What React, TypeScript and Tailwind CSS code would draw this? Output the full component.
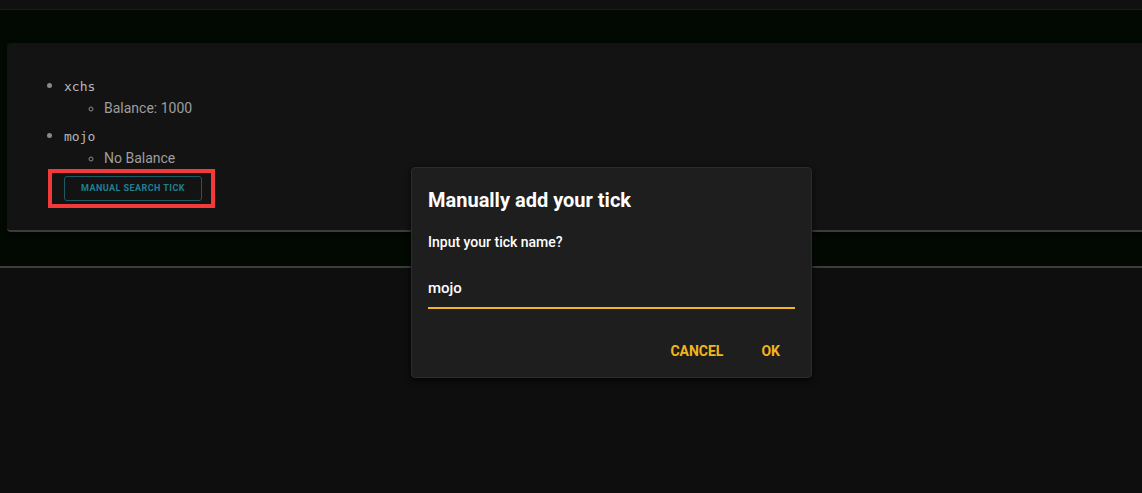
export default function App() {
  return (
    <div className="relative min-h-[493px] w-[1142px] overflow-hidden bg-[#0e0e0e] font-['Roboto',sans-serif]">
      {/* top bar */}
      <div className="h-[10px] border-b border-[#1b1b1b] bg-[#101010]" />

      {/* green band with card */}
      <section className="border-b-2 border-[#3a3d3a] bg-[#020902] pb-[34px] pt-[33px]">
        <div className="ml-[7px] mr-[-10px] h-[189px] rounded-[4px] border-b-2 border-[#3c3c3c] bg-[#131313] pl-[40px] pt-[31px] shadow-[0_2px_4px_rgba(0,0,0,0.6)]">
          <ul className="list-disc pl-[17px] text-[#9e9e9e] marker:text-[#8a8a8a]">
            <li>
              <span className="font-['DejaVu_Sans_Mono',monospace] text-[13px] leading-[20px] text-[#b8b8b8]">
                xchs
              </span>
              <ul className="list-[circle] pl-[40px]">
                <li className="text-[14px] leading-[20px]">Balance: 1000</li>
              </ul>
            </li>
            <li className="mt-[6px]">
              <span className="font-['DejaVu_Sans_Mono',monospace] text-[13px] leading-[20px] text-[#b8b8b8]">
                mojo
              </span>
              <ul className="list-[circle] pl-[40px]">
                <li className="text-[14px] leading-[20px]">No Balance</li>
              </ul>
            </li>
          </ul>
          <div className="ml-[1px] mt-[1px] inline-flex border-4 border-[#f23a3a] py-[3px] pl-[12px] pr-[9px]">
            <button className="h-[25px] w-[138px] rounded-[3px] border border-[#1d5a66] text-[9px] font-bold tracking-[0.45px] text-[#1f7f93]">
              MANUAL SEARCH TICK
            </button>
          </div>
        </div>
      </section>

      {/* dialog */}
      <div className="absolute left-[411px] top-[167px] flex h-[211px] w-[401px] flex-col rounded-[4px] border border-[#2c2c2c] bg-[#1e1e1e] px-[16px] shadow-[0_2px_6px_rgba(0,0,0,0.8)]">
        <h2 className="mt-[20px] text-[20px] font-bold leading-[24px] text-white">
          Manually add your tick
        </h2>
        <p className="mt-[21px] text-[14px] font-medium leading-[18px] text-white">
          Input your tick name?
        </p>
        <div className="mt-[27px] border-b-2 border-[#f0b628] pb-[9px] text-[15px] font-medium leading-[20px] text-white">
          mojo
        </div>
        <div className="mt-[33px] flex justify-end gap-[38px] pr-[15px]">
          <button className="text-[14px] font-bold leading-[18px] text-[#f2b51d]">CANCEL</button>
          <button className="text-[14px] font-bold leading-[18px] text-[#f2b51d]">OK</button>
        </div>
      </div>
    </div>
  );
}
